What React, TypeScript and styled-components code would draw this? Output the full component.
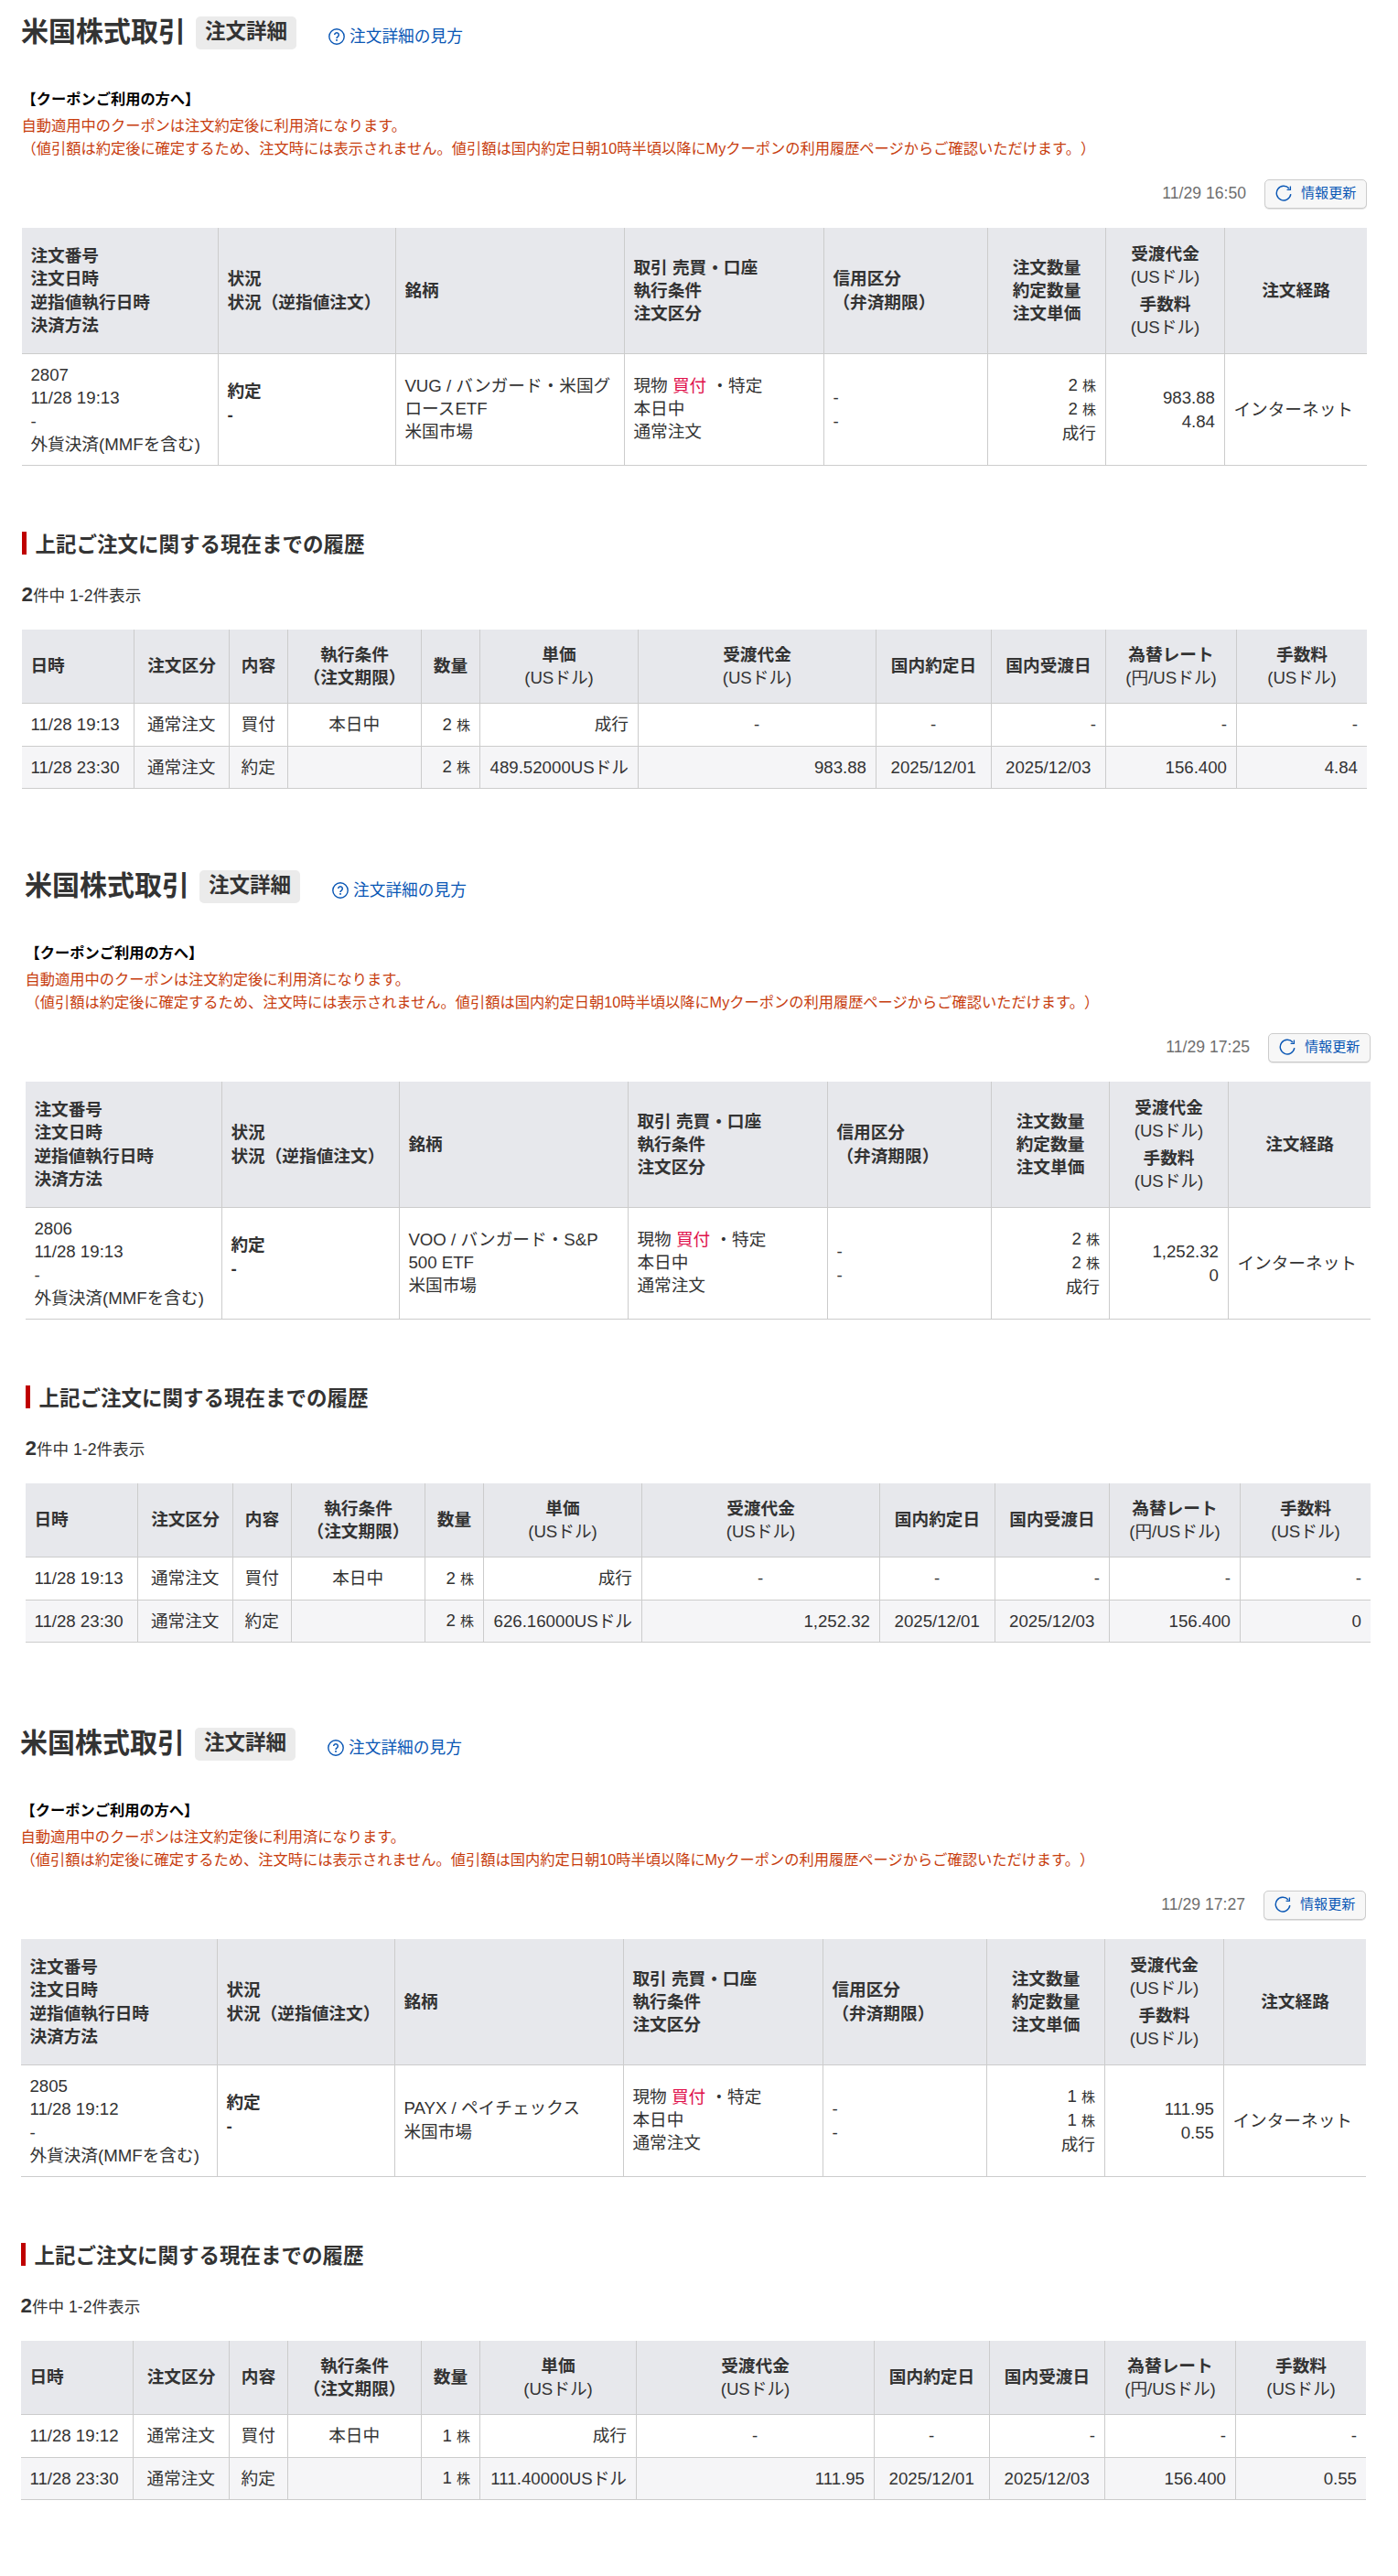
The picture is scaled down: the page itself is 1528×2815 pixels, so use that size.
import React from "react";
import styled, { createGlobalStyle } from "styled-components";

const GlobalStyle = createGlobalStyle`
  *, *::before, *::after { box-sizing: border-box; }
  body {
    margin: 0;
    background: #fff;
    color: #333;
    font-family: "Liberation Sans", "Noto Sans CJK JP", sans-serif;
    font-size: 18.67px;
    line-height: 25.2px;
    text-spacing-trim: space-all;
  }
`;

type Align = "left" | "center" | "right";

const OrderSection = styled.section<{ $left: number; $height: number }>`
  width: 1470px;
  height: ${(p) => p.$height}px;
  margin-left: ${(p) => p.$left}px;
  padding-top: 18px;
`;

const TitleRow = styled.header`
  display: flex;
  align-items: flex-start;
  height: 76px;
`;

const Title = styled.h1`
  margin: 0 11px 0 -1px;
  width: 180px;
  font-size: 30px;
  line-height: 34px;
  white-space: nowrap;
`;

const Badge = styled.span`
  height: 36px;
  padding: 0 10px;
  border-radius: 5px;
  background: #ebebeb;
  font-size: 22.5px;
  font-weight: bold;
  line-height: 34px;
  white-space: nowrap;
`;

const HelpLink = styled.a`
  display: flex;
  align-items: center;
  gap: 5px;
  margin: 9px 0 0 35px;
  color: #0a57b5;
  font-size: 17.7px;
  line-height: 26px;
  white-space: nowrap;
`;

const Notice = styled.div`
  height: 102px;
  margin-left: -0.5px;
  padding-top: 1.5px;
  font-size: 16.24px;
  line-height: 24.3px;
  color: #c73d0e;
  white-space: nowrap;
`;

const NoticeTitle = styled.p`
  margin: 0 0 5.5px;
  color: #000;
  font-weight: bold;
`;

const NoticeText = styled.p`
  margin: 0;
`;

const UpdateBar = styled.div`
  display: flex;
  justify-content: flex-end;
  align-items: center;
  gap: 20px;
  height: 32px;
  margin-bottom: 21px;
`;

const Timestamp = styled.time`
  color: #6f6f6f;
  font-size: 17.6px;
`;

const RefreshButton = styled.button`
  display: flex;
  align-items: center;
  gap: 10px;
  width: 112px;
  height: 32px;
  padding: 0 0 3px 11px;
  border: 1px solid #ccc;
  border-radius: 5px;
  box-shadow: 0 1px 0 #e4e4e4;
  background: #f7f7f7;
  color: #0a57b5;
  font-family: inherit;
  font-size: 15.1px;
  line-height: 20px;
  white-space: nowrap;
`;

const Grid = styled.table<{ $height: number }>`
  width: 1470px;
  height: ${(p) => p.$height}px;
  table-layout: fixed;
  border-collapse: separate;
  border-spacing: 0;
`;

const Row = styled.tr<{ $height: number; $shade?: boolean }>`
  height: ${(p) => p.$height}px;
  background: ${(p) => (p.$shade ? "#f5f5f7" : "transparent")};
`;

const HeadCell = styled.th<{ $align?: Align }>`
  padding: 0 9.4px;
  background: #e7e8ec;
  border-right: 1px solid #ccc;
  border-bottom: 1px solid #ccc;
  text-align: ${(p) => p.$align ?? "center"};
  vertical-align: middle;
  white-space: nowrap;
  &:last-child { border-right: 0; }
`;

const Cell = styled.td<{ $align?: Align; $bold?: boolean; $lift?: number }>`
  padding: 0 10px ${(p) => p.$lift ?? 0}px 9.4px;
  border-right: 1px solid #ccc;
  border-bottom: 1px solid #ccc;
  text-align: ${(p) => p.$align ?? "left"};
  font-weight: ${(p) => (p.$bold ? "bold" : "normal")};
  vertical-align: middle;
  white-space: nowrap;
  &:last-child { border-right: 0; }
`;

const Line = styled.div<{ $gap?: number }>`
  margin-top: ${(p) => p.$gap ?? 0}px;
`;

const Unit = styled.div`
  font-weight: normal;
`;

const Buy = styled.span`
  color: #e0114b;
`;

const Small = styled.span`
  font-size: 15px;
`;

const HistoryTitle = styled.h2`
  margin: 72px 0 31px;
  height: 25px;
  border-left: 5px solid #bf0000;
  padding-left: 9.5px;
  font-size: 22.5px;
  line-height: 29px;
  white-space: nowrap;
`;

const Count = styled.p`
  margin: 0 0 25px -0.5px;
  height: 26px;
  font-size: 17.6px;
  line-height: 26px;
`;

const CountNumber = styled.b`
  font-size: 22.4px;
`;

const HelpIcon = () => (
  <svg width="18" height="18" viewBox="0 0 18 18" fill="none" stroke="currentColor">
    <circle cx="9" cy="9" r="8.2" strokeWidth="1.4" />
    <path d="M6.7 7.1a2.3 2.3 0 1 1 3.5 2c-.8.5-1.2.9-1.2 1.8" strokeWidth="1.5" />
    <path d="M9 12v1.7" strokeWidth="1.7" />
  </svg>
);

const RefreshIcon = () => (
  <svg width="18" height="18" viewBox="0 0 18 18" fill="none" stroke="currentColor" strokeWidth="1.4">
    <path d="M15 4A7.8 7.8 0 1 0 16.8 10.2" />
    <path d="M16.4 1.6v3.7h-3.8" strokeWidth="1.3" />
  </svg>
);

interface Order {
  left: number;
  height: number;
  updated: string;
  id: string;
  time: string;
  name: string[];
  qty: string;
  amount: string;
  fee: string;
  price: string;
  historyColumns: number[];
}

const summaryColumns = [215, 194, 250, 218, 179, 129, 130, 155];

const orders: Order[] = [
  {
    left: 24, height: 933, updated: "11/29 16:50", id: "2807", time: "11/28 19:13",
    name: ["VUG / バンガード・米国グ", "ロースETF", "米国市場"],
    qty: "2", amount: "983.88", fee: "4.84", price: "489.52000",
    historyColumns: [123, 104, 64, 146, 64, 173, 260, 126, 125, 143, 142],
  },
  {
    left: 28, height: 937, updated: "11/29 17:25", id: "2806", time: "11/28 19:13",
    name: ["VOO / バンガード・S&P", "500 ETF", "米国市場"],
    qty: "2", amount: "1,252.32", fee: "0", price: "626.16000",
    historyColumns: [123, 104, 64, 146, 64, 173, 260, 126, 125, 143, 142],
  },
  {
    left: 23, height: 945, updated: "11/29 17:27", id: "2805", time: "11/28 19:12",
    name: ["PAYX / ペイチェックス", "米国市場"],
    qty: "1", amount: "111.95", fee: "0.55", price: "111.40000",
    historyColumns: [123, 105, 64, 146, 64, 171, 260, 126, 126, 143, 142],
  },
];

const Lines = ({ items }: { items: string[] }) => (
  <>{items.map((t, i) => <Line key={i}>{t}</Line>)}</>
);

const Columns = ({ widths }: { widths: number[] }) => (
  <colgroup>{widths.map((w, i) => <col key={i} width={w} />)}</colgroup>
);

const Shares = ({ n }: { n: string }) => <>{n} <Small>株</Small></>;

const SummaryTable = ({ o }: { o: Order }) => (
  <Grid $height={260}>
    <Columns widths={summaryColumns} />
    <thead>
      <Row $height={138}>
        <HeadCell $align="left"><Lines items={["注文番号", "注文日時", "逆指値執行日時", "決済方法"]} /></HeadCell>
        <HeadCell $align="left"><Lines items={["状況", "状況（逆指値注文）"]} /></HeadCell>
        <HeadCell $align="left">銘柄</HeadCell>
        <HeadCell $align="left"><Lines items={["取引 売買・口座", "執行条件", "注文区分"]} /></HeadCell>
        <HeadCell $align="left"><Lines items={["信用区分", "（弁済期限）"]} /></HeadCell>
        <HeadCell><Lines items={["注文数量", "約定数量", "注文単価"]} /></HeadCell>
        <HeadCell>
          <Line>受渡代金</Line>
          <Unit>(USドル)</Unit>
          <Line $gap={5}>手数料</Line>
          <Unit>(USドル)</Unit>
        </HeadCell>
        <HeadCell>注文経路</HeadCell>
      </Row>
    </thead>
    <tbody>
      <Row $height={122}>
        <Cell><Lines items={[o.id, o.time, "-", "外貨決済(MMFを含む)"]} /></Cell>
        <Cell $bold $lift={14}><Lines items={["約定", "-"]} /></Cell>
        <Cell $lift={2}><Lines items={o.name} /></Cell>
        <Cell $lift={2}>
          <Line>現物 <Buy>買付</Buy> ・特定</Line>
          <Lines items={["本日中", "通常注文"]} />
        </Cell>
        <Cell><Lines items={["-", "-"]} /></Cell>
        <Cell $align="right" $lift={1}>
          <Line><Shares n={o.qty} /></Line>
          <Line><Shares n={o.qty} /></Line>
          <Line>成行</Line>
        </Cell>
        <Cell $align="right"><Lines items={[o.amount, o.fee]} /></Cell>
        <Cell>インターネット</Cell>
      </Row>
    </tbody>
  </Grid>
);

const HistoryTable = ({ o }: { o: Order }) => (
  <Grid $height={174}>
    <Columns widths={o.historyColumns} />
    <thead>
      <Row $height={81}>
        <HeadCell $align="left">日時</HeadCell>
        <HeadCell>注文区分</HeadCell>
        <HeadCell>内容</HeadCell>
        <HeadCell><Lines items={["執行条件", "（注文期限）"]} /></HeadCell>
        <HeadCell>数量</HeadCell>
        <HeadCell><Line>単価</Line><Unit>(USドル)</Unit></HeadCell>
        <HeadCell><Line>受渡代金</Line><Unit>(USドル)</Unit></HeadCell>
        <HeadCell>国内約定日</HeadCell>
        <HeadCell>国内受渡日</HeadCell>
        <HeadCell><Line>為替レート</Line><Unit>(円/USドル)</Unit></HeadCell>
        <HeadCell><Line>手数料</Line><Unit>(USドル)</Unit></HeadCell>
      </Row>
    </thead>
    <tbody>
      <Row $height={47}>
        <Cell>{o.time}</Cell>
        <Cell $align="center">通常注文</Cell>
        <Cell $align="center">買付</Cell>
        <Cell $align="center">本日中</Cell>
        <Cell $align="right"><Shares n={o.qty} /></Cell>
        <Cell $align="right">成行</Cell>
        <Cell $align="center">-</Cell>
        <Cell $align="center">-</Cell>
        <Cell $align="right">-</Cell>
        <Cell $align="right">-</Cell>
        <Cell $align="right">-</Cell>
      </Row>
      <Row $height={46} $shade>
        <Cell>11/28 23:30</Cell>
        <Cell $align="center">通常注文</Cell>
        <Cell $align="center">約定</Cell>
        <Cell />
        <Cell $align="right"><Shares n={o.qty} /></Cell>
        <Cell $align="right">{o.price}USドル</Cell>
        <Cell $align="right">{o.amount}</Cell>
        <Cell $align="center">2025/12/01</Cell>
        <Cell $align="center">2025/12/03</Cell>
        <Cell $align="right">156.400</Cell>
        <Cell $align="right">{o.fee}</Cell>
      </Row>
    </tbody>
  </Grid>
);

const OrderDetail = ({ o }: { o: Order }) => (
  <OrderSection $left={o.left} $height={o.height}>
    <TitleRow>
      <Title>米国株式取引</Title>
      <Badge>注文詳細</Badge>
      <HelpLink><HelpIcon />注文詳細の見方</HelpLink>
    </TitleRow>
    <Notice>
      <NoticeTitle>【クーポンご利用の方へ】</NoticeTitle>
      <NoticeText>自動適用中のクーポンは注文約定後に利用済になります。</NoticeText>
      <NoticeText>（値引額は約定後に確定するため、注文時には表示されません。値引額は国内約定日朝10時半頃以降にMyクーポンの利用履歴ページからご確認いただけます。）</NoticeText>
    </Notice>
    <UpdateBar>
      <Timestamp>{o.updated}</Timestamp>
      <RefreshButton><RefreshIcon />情報更新</RefreshButton>
    </UpdateBar>
    <SummaryTable o={o} />
    <HistoryTitle>上記ご注文に関する現在までの履歴</HistoryTitle>
    <Count><CountNumber>2</CountNumber>件中 1-2件表示</Count>
    <HistoryTable o={o} />
  </OrderSection>
);

export default function App() {
  return (
    <>
      <GlobalStyle />
      <main>
        {orders.map((o) => <OrderDetail key={o.id} o={o} />)}
      </main>
    </>
  );
}
